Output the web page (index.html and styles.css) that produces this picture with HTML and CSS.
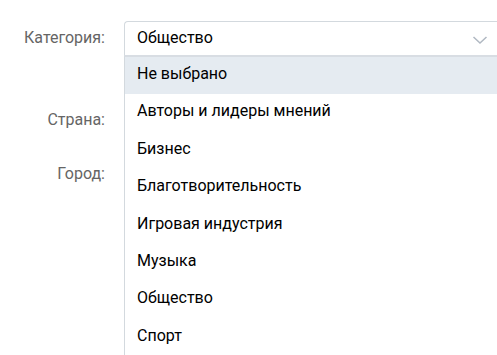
FILE: index.html
```html
<!DOCTYPE html>
<html lang="ru">
<head>
<meta charset="utf-8">
<link rel="stylesheet" href="styles.css">
</head>
<body>
<div class="form">
  <div class="row row-cat">
    <div class="label">Категория:</div>
    <div class="field">
      <div class="select">
        <span class="value">Общество</span>
        <svg class="chev" width="16" height="10" viewBox="0 0 16 10"><path d="M1.5 2 L8 8 L14.5 2" fill="none" stroke="#b0b8c2" stroke-width="1.5"/></svg>
      </div>
      <ul class="menu">
        <li class="item active">Не выбрано</li>
        <li class="item">Авторы и лидеры мнений</li>
        <li class="item">Бизнес</li>
        <li class="item">Благотворительность</li>
        <li class="item">Игровая индустрия</li>
        <li class="item">Музыка</li>
        <li class="item">Общество</li>
        <li class="item">Спорт</li>
      </ul>
    </div>
  </div>
  <div class="row row-country">
    <div class="label">Страна:</div>
    <div class="field"></div>
  </div>
  <div class="row row-city">
    <div class="label">Город:</div>
    <div class="field"></div>
  </div>
</div>
</body>
</html>
```
FILE: styles.css
```css
html, body {
  margin: 0;
  padding: 0;
  background: #fff;
  overflow: hidden;
  width: 497px;
  height: 355px;
}
body {
  font-family: Roboto, "Noto Sans", sans-serif;
  font-size: 16px;
  color: #000;
}
.form {
  padding-top: 21px;
  display: flex;
  flex-direction: column;
  overflow: hidden;
  height: 334px;
}
.row {
  display: flex;
  align-items: center;
  height: 34px;
  flex: none;
}
.row-country { margin-top: 48px; }
.row-city { margin-top: 20px; }
.label {
  width: 105px;
  text-align: right;
  color: #656565;
  font-size: 16px;
  flex: none;
  padding-bottom: 1px;
}
.field {
  margin-left: 19px;
  width: 373px;
  flex: none;
  position: relative;
  height: 34px;
}
.select {
  box-sizing: border-box;
  height: 34px;
  border: 1px solid #d3d9de;
  border-right: none;
  border-bottom: none;
  border-radius: 4px 0 0 0;
  display: flex;
  align-items: center;
  padding-left: 12px;
  padding-bottom: 1px;
  position: relative;
  background: #fff;
}
.value { line-height: 18px; }
.chev {
  position: absolute;
  left: 347px;
  top: 13px;
}
.menu {
  position: absolute;
  top: 34px;
  left: 0;
  right: 0;
  margin: 0;
  padding: 0;
  list-style: none;
  border-top: 2px solid #d8dde3;
  border-left: 1px solid #d3d9de;
  background: #fff;
  z-index: 2;
}
.item {
  box-sizing: border-box;
  height: 37.4px;
  line-height: 34.4px;
  padding-bottom: 3px;
  padding-left: 12px;
  white-space: nowrap;
}
.item.active {
  background: #e5ebf1;
}
```
